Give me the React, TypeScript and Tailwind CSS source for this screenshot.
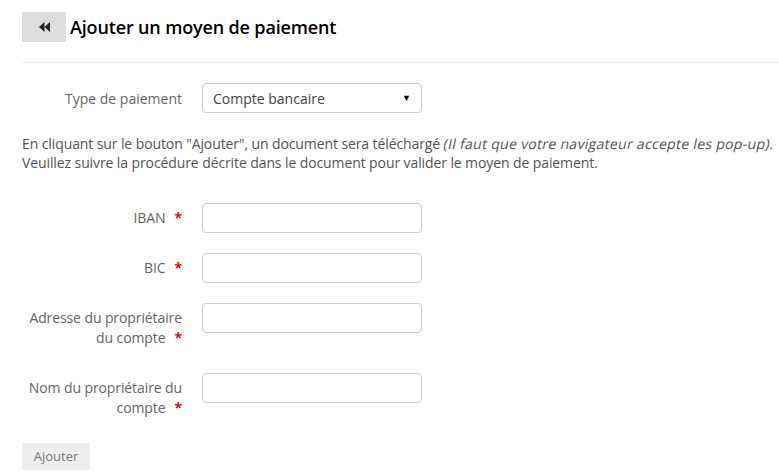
function Field({ label }: { label: string }) {
  return (
    <div className="flex items-start">
      <label className="w-[160px] text-right pt-[5px] pb-[5px] leading-[20px] text-[#666] tracking-[-0.1px]">
        {label}
        <span className="text-red-600 font-bold ml-[9px]">*</span>
      </label>
      <input className="ml-[20px] w-[220px] h-[30px] border border-[#ccc] rounded-[4px] px-2 outline-none" />
    </div>
  );
}

export default function App() {
  return (
    <div className="min-h-screen bg-white px-[22px] pt-[12px] text-[14px] text-[#555]" style={{ fontFamily: '"Open Sans", sans-serif' }}>
      <div className="flex items-center gap-[4px]">
        <button className="w-[44px] h-[30px] bg-[#ddd] flex items-center justify-center">
          <svg width="11" height="10" viewBox="0 0 11 10"><path d="M5.5 0 L0 5 L5.5 10Z M11 0 L5.5 5 L11 10Z" fill="#222" /></svg>
        </button>
        <h1 className="text-[18px] font-semibold text-black leading-none tracking-[-0.15px]">Ajouter un moyen de paiement</h1>
      </div>

      <hr className="mt-[20px] -mr-[22px] border-t border-[#eee]" />

      <div className="mt-[20px] flex items-center">
        <label className="w-[160px] text-right text-[#666]">Type de paiement</label>
        <div className="ml-[20px] w-[220px] h-[30px] border border-[#ccc] rounded-[4px] flex items-center justify-between px-[10px] text-[#444]">
          <span>Compte bancaire</span>
          <span className="text-[9px] text-black">▼</span>
        </div>
      </div>

      <div className="mt-[21px] -mr-[22px] leading-[19px] text-[#555] tracking-[-0.1px] whitespace-nowrap">
        <p>
          En cliquant sur le bouton "Ajouter", un document sera téléchargé{' '}
          <span className="inline-block -skew-x-12 tracking-[0.3px]">(Il faut que votre navigateur accepte les pop-up).</span>
        </p>
        <p>Veuillez suivre la procédure décrite dans le document pour valider le moyen de paiement.</p>
      </div>

      <div className="mt-[31px] flex flex-col gap-[20px]">
        <Field label="IBAN" />
        <Field label="BIC" />
        <Field label="Adresse du propriétaire du compte" />
        <Field label="Nom du propriétaire du compte" />
      </div>

      <button className="mt-[20px] w-[68px] h-[27px] bg-[#eee] text-[#777] text-[13px]">Ajouter</button>
    </div>
  );
}
